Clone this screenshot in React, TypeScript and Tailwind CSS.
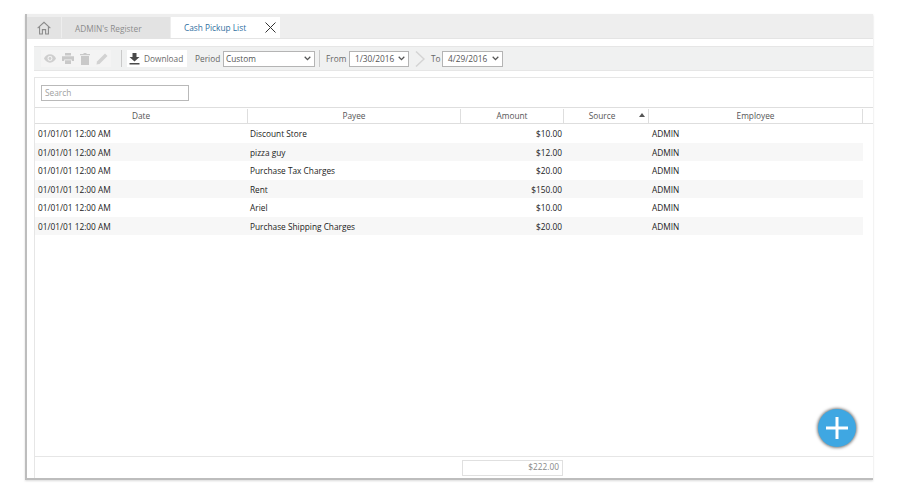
import React from "react";

const rows = [
  ["Discount Store", "$10.00"],
  ["pizza guy", "$12.00"],
  ["Purchase Tax Charges", "$20.00"],
  ["Rent", "$150.00"],
  ["Ariel", "$10.00"],
  ["Purchase Shipping Charges", "$20.00"],
];

const Chevron = () => (
  <svg width="7" height="5" viewBox="0 0 7 5" className="shrink-0">
    <path d="M0.7 0.8 L3.5 3.6 L6.3 0.8" fill="none" stroke="#555" strokeWidth="1.3" />
  </svg>
);

function Select({ label, className }: { label: string; className: string }) {
  return (
    <div className={`flex h-[16px] items-center justify-between border border-[#b4b4b4] bg-white text-[#555] ${className}`}>
      <span className="pt-[1px]">{label}</span>
      <Chevron />
    </div>
  );
}

export default function App() {
  return (
    <div className="h-[493px] w-[900px] overflow-hidden bg-white pl-[25px] pt-[14px] text-[8.3px] text-[#222] [font-family:'Open_Sans','Noto_Sans',sans-serif]">
      <div className="relative flex h-[466px] w-[848px] flex-col border-b-[2px] border-l-[2px] border-b-[#bdbdbd] border-l-[#bdbdbd] bg-white shadow-[0_1px_2px_rgba(0,0,0,0.15)]">
        {/* Tabs */}
        <div className="flex h-[25px] shrink-0 items-start border-b border-[#e4e4e4] bg-[#eeeeee] pt-[3px]">
          <div className="flex h-[22px] w-[34px] items-center justify-center bg-[#e3e3e3]">
            <svg width="14" height="14" viewBox="0 0 13 13" fill="none" stroke="#8a8a8a" strokeWidth="1">
              <path d="M0.6 6.6 L6.5 1.2 L12.4 6.6" />
              <path d="M2.4 5.4 V12 H5 V8 H8 V12 H10.6 V5.4" />
            </svg>
          </div>
          <div className="ml-[1px] flex h-[22px] w-[108px] items-center bg-[#e3e3e3] pl-[13px] pt-[2px] text-[#8c8c8c]">ADMIN's Register</div>
          <div className="ml-[1px] flex h-[21px] w-[109px] items-center justify-between bg-white pl-[13px] pr-[4px] text-[#2f6f9f]">
            <span className="pt-[2px]">Cash Pickup List</span>
            <svg width="11" height="11" viewBox="0 0 11 11" stroke="#333" strokeWidth="1">
              <path d="M0.5 0.5 L10.5 10.5 M10.5 0.5 L0.5 10.5" />
            </svg>
          </div>
        </div>

        {/* Toolbar */}
        <div className="ml-[7px] mt-[7px] flex h-[25px] shrink-0 items-center border-y border-[#e6e6e6] bg-[#f0f1f1] pl-[7px] text-[#666]">
          <div className="flex h-[17px] w-[70px] items-center justify-between bg-[#f4f4f4] px-[3px]">
            <svg width="12" height="9" viewBox="0 0 13 9" fill="#cfcfcf">
              <path fillRule="evenodd" d="M6.5 0 C9.5 0 12 2.2 13 4.5 C12 6.8 9.5 9 6.5 9 C3.5 9 1 6.8 0 4.5 C1 2.2 3.5 0 6.5 0 Z M6.5 1.8 A2.7 2.7 0 1 0 6.5 7.2 A2.7 2.7 0 1 0 6.5 1.8 Z" />
              <circle cx="6.5" cy="4.5" r="1.5" />
            </svg>
            <svg width="12" height="11" viewBox="0 0 12 11" fill="#c9c9c9">
              <path d="M3 0 H9 V2.5 H3 Z M0 3.3 H12 V8 H9.8 V6.5 H2.2 V8 H0 Z M3 7.3 H9 V11 H3 Z" />
            </svg>
            <svg width="10" height="12" viewBox="0 0 10 12" fill="#c9c9c9">
              <path d="M3.5 0 H6.5 V1 H10 V2.3 H0 V1 H3.5 Z M1 3 H9 V12 H1 Z" />
            </svg>
            <svg width="12" height="12" viewBox="0 0 12 12" fill="#d2d2d2">
              <path d="M9 0.5 L11.5 3 L3.5 11 L0.5 11.5 L1 8.5 Z" />
            </svg>
          </div>
          <div className="ml-[10px] h-[17px] w-px bg-[#c9c9c9]" />
          <div className="ml-[5px] flex h-[17px] w-[60px] items-center bg-white pl-[2px] text-[#6a6a6a]">
            <svg width="11" height="12" viewBox="0 0 11 12" fill="#4a4a4a" className="mr-[4px] shrink-0">
              <path d="M3.5 0 H7.5 V4 H10.5 L5.5 8.5 L0.5 4 H3.5 Z M0.5 10 H10.5 V11.5 H0.5 Z" />
            </svg>
            <span className="pt-[2px]">Download</span>
          </div>
          <span className="ml-[8px] w-[25px] pt-[2px]">Period</span>
          <Select label="Custom" className="ml-[3px] w-[92px] pl-[2px] pr-[3px]" />
          <div className="ml-[4px] h-[17px] w-px bg-[#c9c9c9]" />
          <span className="ml-[6px] w-[20px] pt-[2px]">From</span>
          <Select label="1/30/2016" className="ml-[3px] w-[60px] pl-[5px] pr-[3px]" />
          <svg width="10" height="16" viewBox="0 0 10 16" fill="none" stroke="#d4d4d4" strokeWidth="1.5" className="ml-[6px]">
            <path d="M1 0.5 L9 8 L1 15.5" />
          </svg>
          <span className="ml-[6px] w-[10px] pt-[2px]">To</span>
          <Select label="4/29/2016" className="ml-[1px] w-[61px] pl-[5px] pr-[3px]" />
        </div>

        {/* Panel */}
        <div className="ml-[7px] mt-[6px] flex min-h-0 flex-1 flex-col border-l border-t border-[#e6e6e6]">
          <div className="flex h-[30px] shrink-0 items-center border-b border-[#dedede] pl-[6px]">
            <div className="flex h-[16px] w-[148px] items-center border border-[#b9b9b9] pl-[3px] pt-[2px] text-[#a0a0a0]">Search</div>
          </div>
          <div className="flex h-[16px] shrink-0 border-b border-[#dedede] pt-[1px] text-[#555]">
            <div className="flex w-[213px] items-center justify-center border-r border-[#dedede] pt-[1px]">Date</div>
            <div className="flex w-[213px] items-center justify-center border-r border-[#dedede] pt-[1px]">Payee</div>
            <div className="flex w-[103px] items-center justify-center border-r border-[#dedede] pt-[1px]">Amount</div>
            <div className="relative flex w-[85px] items-center justify-center border-r border-[#dedede] pr-[8px] pt-[1px]">
              Source
              <svg width="6" height="4" viewBox="0 0 6 4" fill="#555" className="absolute right-[3px] top-[4px]">
                <path d="M0 4 L3 0 L6 4 Z" />
              </svg>
            </div>
            <div className="flex w-[214px] items-center justify-center border-r border-[#dedede] pt-[1px]">Employee</div>
          </div>
          <div className="flex-1">
            {rows.map(([payee, amount], i) => (
              <div key={i} className={`flex h-[18.55px] w-[828px] items-center pt-[2px] ${i % 2 ? "bg-[#f7f7f7]" : "bg-white"}`}>
                <div className="w-[213px] pl-[3px]">01/01/01 12:00 AM</div>
                <div className="w-[213px] pl-[2px]">{payee}</div>
                <div className="w-[103px] pr-[2px] text-right">{amount}</div>
                <div className="w-[85px]" />
                <div className="pl-[3px]">ADMIN</div>
              </div>
            ))}
          </div>
          <div className="flex h-[22px] shrink-0 items-center border-t border-[#e6e6e6] pl-[427px]">
            <div className="flex h-[16px] w-[101px] items-center justify-end border border-[#e0e0e0] pr-[3px] text-[#888]">$222.00</div>
          </div>
        </div>

        {/* FAB */}
        <div className="absolute left-[791px] top-[395px] flex h-[38px] w-[38px] items-center justify-center rounded-full bg-[#3fa7e2] shadow-[0_0_3px_1px_rgba(0,0,0,0.5)]">
          <svg width="22" height="22" viewBox="0 0 22 22" stroke="#fff" strokeWidth="3">
            <path d="M11 0 V22 M0 11 H22" />
          </svg>
        </div>
      </div>
    </div>
  );
}
